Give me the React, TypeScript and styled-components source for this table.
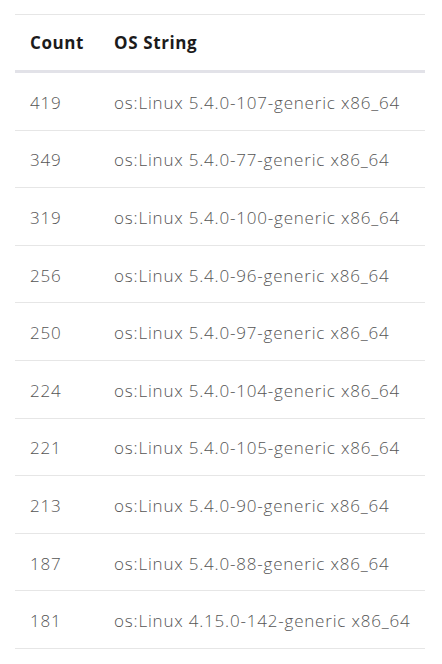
import React from "react";
import styled, { createGlobalStyle } from "styled-components";

const GlobalStyle = createGlobalStyle`
  body {
    margin: 0;
    background: #ffffff;
    font-family: "Open Sans", "Liberation Sans", sans-serif;
  }
`;

const Wrapper = styled.div`
  padding: 14px 20px 0 15px;
`;

const Table = styled.table`
  width: 100%;
  border-collapse: collapse;
  border-top: 1px solid #e6e6e6;
  font-size: 17px;
`;

const HeadCell = styled.th`
  text-align: left;
  height: 55px;
  padding: 0 15px;
  font-weight: 700;
  letter-spacing: 0.6px;
  color: #1b1b1b;
  border-bottom: 3px solid #e2e2e8;
  white-space: nowrap;
`;

const Cell = styled.td<{ $wide?: boolean }>`
  height: 54.6px;
  padding: 2px 15px 0;
  color: #555555;
  font-weight: 300;
  letter-spacing: 0.8px;
  border-bottom: 1px solid #e6e6e6;
  white-space: nowrap;
  width: ${(props) => (props.$wide ? "auto" : "55px")};
`;

const rows: [number, string][] = [
  [419, "os:Linux 5.4.0-107-generic x86_64"],
  [349, "os:Linux 5.4.0-77-generic x86_64"],
  [319, "os:Linux 5.4.0-100-generic x86_64"],
  [256, "os:Linux 5.4.0-96-generic x86_64"],
  [250, "os:Linux 5.4.0-97-generic x86_64"],
  [224, "os:Linux 5.4.0-104-generic x86_64"],
  [221, "os:Linux 5.4.0-105-generic x86_64"],
  [213, "os:Linux 5.4.0-90-generic x86_64"],
  [187, "os:Linux 5.4.0-88-generic x86_64"],
  [181, "os:Linux 4.15.0-142-generic x86_64"],
];

const App = () => {
  return (
    <Wrapper>
      <GlobalStyle />
      <Table>
        <thead>
          <tr>
            <HeadCell>Count</HeadCell>
            <HeadCell>OS String</HeadCell>
          </tr>
        </thead>
        <tbody>
          {rows.map(([count, os]) => (
            <tr key={os}>
              <Cell>{count}</Cell>
              <Cell $wide>{os}</Cell>
            </tr>
          ))}
        </tbody>
      </Table>
    </Wrapper>
  );
};

export default App;
